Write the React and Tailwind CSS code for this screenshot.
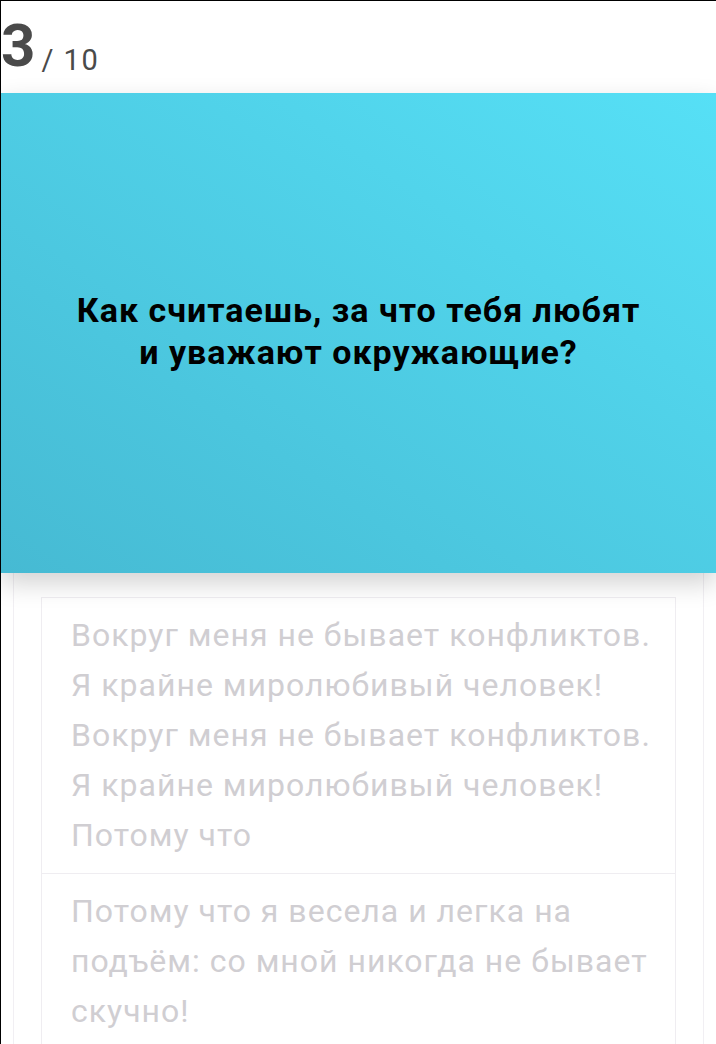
import React from "react";

const answers = [
  "Вокруг меня не бывает конфликтов. Я крайне миролюбивый человек! Вокруг меня не бывает конфликтов. Я крайне миролюбивый человек! Потому что",
  "Потому что я весела и легка на подъём: со мной никогда не бывает скучно!",
];

export default function App() {
  return (
    <div
      className="w-[716px] h-[1044px] overflow-hidden bg-white border-t border-l border-black"
      style={{ fontFamily: "Roboto, 'Noto Sans', sans-serif" }}
    >
      {/* counter */}
      <div className="h-[92px] flex items-end pb-[17px]">
        <span className="text-[60px] leading-none font-bold text-[#4a4a4a] tracking-[2px]">3</span>
        <span className="text-[29px] leading-none text-[#4a4a4a] ml-[4px] mb-[1px] tracking-[1.5px]">/ 10</span>
      </div>

      {/* question card */}
      <div className="relative z-10 h-[480px] flex items-center justify-center bg-gradient-to-tr from-[#46bad3] to-[#56e0f6] shadow-[0_10px_24px_rgba(0,0,0,0.18)]">
        <h1 className="text-center text-[34px] leading-[42px] font-bold text-black tracking-[1px] -mt-[4px]">
          Как считаешь, за что тебя любят
          <br />
          и уважают окружающие?
        </h1>
      </div>

      {/* answers */}
      <div className="mx-[12px] px-[27px] pt-[24px] border-x border-[#f1eff3] h-full">
        <div className="border border-[#efedf1]">
          {answers.map((a, i) => (
            <div
              key={i}
              className="pl-[29px] pr-[14px] pt-[12px] pb-[13px] border-b border-[#efedf1] last:border-0 text-[32px] leading-[50px] text-[#d0ced2] tracking-[1px]"
            >
              {a}
            </div>
          ))}
        </div>
      </div>
    </div>
  );
}
